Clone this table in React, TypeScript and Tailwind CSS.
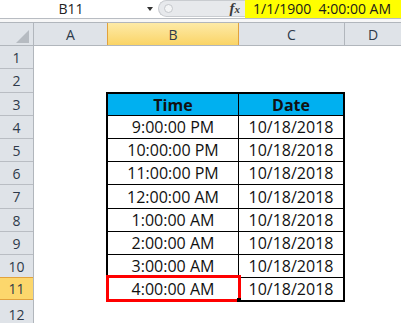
import React from 'react';

const rowHeaderHeights = [
  'h-[23px]', 'h-[24px]', 'h-[23px]', 'h-[23px]', 'h-[23px]', 'h-[23px]',
  'h-[24px]', 'h-[23px]', 'h-[23px]', 'h-[23px]', 'h-[23px]', 'h-[30px]',
];

const rows = [
  { time: '9:00:00 PM', h: 'h-[23px]' },
  { time: '10:00:00 PM', h: 'h-[23px]' },
  { time: '11:00:00 PM', h: 'h-[23px]' },
  { time: '12:00:00 AM', h: 'h-[24px]' },
  { time: '1:00:00 AM', h: 'h-[23px]' },
  { time: '2:00:00 AM', h: 'h-[23px]' },
  { time: '3:00:00 AM', h: 'h-[23px]' },
  { time: '4:00:00 AM', h: 'h-[22px]' },
];

function FormulaBar() {
  return (
    <div className="flex h-[19px] border-b border-[#b8bcc2] bg-white">
      <div className="relative flex w-[158px] items-center">
        <span className="w-[142px] text-center text-[14px] leading-none text-[#222]">B11</span>
        <span className="ml-[5px] h-0 w-0 border-x-[3px] border-t-[4px] border-x-transparent border-t-[#333]" />
      </div>
      <div className="flex h-[17px] w-[87px] items-center rounded-l-full border border-r-0 border-[#c9ccd0] bg-[#e7e9ec]">
        <div className="ml-[5px] h-[9px] w-[9px] rounded-full border border-[#c4c7cb] bg-[#f4f5f6]" />
        <span className="ml-auto mr-[5px] font-['Liberation_Serif',serif] text-[15px] italic font-bold leading-none text-[#3a3a3a]">
          f<span className="text-[11px]">x</span>
        </span>
      </div>
      <div className="flex flex-1 items-center bg-[#ffff00] pl-[8px] text-[14px] leading-none text-[#1a1a1a] whitespace-pre">
        {'1/1/1900  4:00:00 AM'}
      </div>
    </div>
  );
}

function ColumnHeaders() {
  return (
    <div className="flex h-[24px] border-y border-[#b1b6bc] bg-[#dfe3e8] text-[14px] text-[#2e3a4a]">
      <div className="relative w-[34px] border-r border-[#b1b6bc]">
        <svg className="absolute left-0 top-0" width="33" height="22" viewBox="0 0 33 22">
          <polygon points="29,7 29,20 16,20" fill="#b6bbc1" />
        </svg>
      </div>
      <div className="flex w-[73px] items-center justify-center">A</div>
      <div className="flex w-[132px] items-center justify-center border-x border-[#e2a23c] bg-gradient-to-b from-[#fdeaa6] to-[#fad465]">
        B
      </div>
      <div className="flex w-[106px] items-center justify-center border-r border-[#b1b6bc]">C</div>
      <div className="flex flex-1 items-center justify-center">D</div>
    </div>
  );
}

function RowHeaders() {
  return (
    <div className="w-[34px] shrink-0 border-r border-[#b1b6bc] bg-[#dfe3e8] text-[14px] text-[#2e3a4a]">
      {rowHeaderHeights.map((h, i) => {
        const selected = i === 10;
        return (
          <div
            key={i}
            className={
              selected
                ? `${h} flex items-center justify-center border-b border-[#e2a23c] bg-[#fcd76c] -mt-px border-t`
                : `${h} flex items-center justify-center border-b border-[#b9bdc3]`
            }
          >
            {i + 1}
          </div>
        );
      })}
    </div>
  );
}

function TimeTable() {
  return (
    <div className="relative ml-[72px] mt-[46px] w-[239px] border-2 border-black text-[16px] text-[#111]">
      <div className="flex h-[22px] border-b border-black bg-[#00b0f0] font-bold">
        <div className="flex w-[131px] items-center justify-center border-r border-black">Time</div>
        <div className="flex flex-1 items-center justify-center">Date</div>
      </div>
      {rows.map((r, i) => (
        <div key={r.time} className={`flex ${r.h} ${i < rows.length - 1 ? 'border-b border-black' : ''}`}>
          <div className="flex w-[131px] items-center justify-center border-r border-black">{r.time}</div>
          <div className="flex flex-1 items-center justify-center">10/18/2018</div>
        </div>
      ))}
      {/* active cell B11 */}
      <div className="absolute left-[-2px] top-[181px] h-[27px] w-[135px] border-[3px] border-[#ff0000]" />
      <div className="absolute left-[129px] top-[204px] h-[4px] w-[4px] bg-black" />
    </div>
  );
}

export default function App() {
  return (
    <div className="h-[323px] w-[401px] overflow-hidden bg-white font-['Open_Sans',sans-serif]">
      <FormulaBar />
      <div className="h-[3px] bg-[#f7f7f7]" />
      <ColumnHeaders />
      <div className="flex">
        <RowHeaders />
        <div className="flex-1">
          <TimeTable />
        </div>
      </div>
    </div>
  );
}
